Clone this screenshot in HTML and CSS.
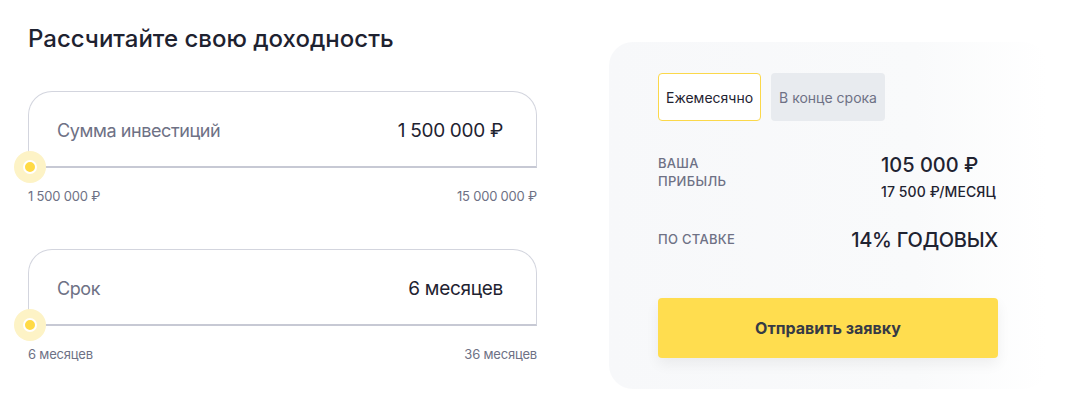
FILE: index.html
```html
<!DOCTYPE html>
<html lang="ru">
<head>
    <meta charset="UTF-8">
    <meta name="viewport" content="width=device-width, initial-scale=1.0">
    <title>Рассчитайте свою доходность</title>
    <link rel="stylesheet" href="styles.css">
</head>
<body>
    <div class="calc">
        <div class="calc-left">
            <h2 class="calc-title">Рассчитайте свою доходность</h2>

            <div class="field">
                <div class="field-box">
                    <span class="field-label">Сумма инвестиций</span>
                    <span class="field-value">1 500 000 ₽</span>
                </div>
                <span class="slider-dot"></span>
                <div class="field-range">
                    <span>1 500 000 ₽</span>
                    <span>15 000 000 ₽</span>
                </div>
            </div>

            <div class="field">
                <div class="field-box">
                    <span class="field-label">Срок</span>
                    <span class="field-value">6 месяцев</span>
                </div>
                <span class="slider-dot"></span>
                <div class="field-range">
                    <span>6 месяцев</span>
                    <span>36 месяцев</span>
                </div>
            </div>
        </div>

        <div class="calc-card">
            <div class="tabs">
                <button class="tab tab-active">Ежемесячно</button>
                <button class="tab">В конце срока</button>
            </div>

            <div class="result-row">
                <div class="result-label">Ваша<br>прибыль</div>
                <div class="result-value">
                    <div class="result-big">105 000 ₽</div>
                    <div class="result-small">17 500 ₽/месяц</div>
                </div>
            </div>

            <div class="result-row result-rate">
                <div class="result-label">По ставке</div>
                <div class="result-big">14% годовых</div>
            </div>

            <button class="submit-btn">Отправить заявку</button>
        </div>
    </div>
</body>
</html>
```

FILE: styles.css
```css
body {
    margin: 0;
    font-family: Inter, "Noto Sans", sans-serif;
    color: #1f2331;
    background-color: #fff;
}
.calc {
    display: flex;
    align-items: flex-start;
    gap: 72px;
    padding: 24px 0 0 28px;
}
.calc-left {
    width: 509px;
}
.calc-title {
    margin: 0 0 37px;
    font-size: 24px;
    line-height: 30px;
    font-weight: 500;
    color: #1e2230;
}
.field {
    position: relative;
    margin-bottom: 45px;
}
.field-box {
    box-sizing: border-box;
    height: 77px;
    display: flex;
    align-items: center;
    justify-content: space-between;
    padding: 3px 33px 0 28px;
    border: 1px solid #d3d5de;
    border-bottom: 2px solid #c7c9d4;
    border-radius: 24px 24px 0 0;
}
.field-label {
    font-size: 18px;
    letter-spacing: -0.4px;
    color: #6e7185;
}
.field-value {
    font-size: 19px;
    letter-spacing: -0.3px;
    color: #1f2331;
}
.slider-dot {
    position: absolute;
    left: -14px;
    top: 60px;
    width: 32px;
    height: 32px;
    border-radius: 50%;
    background-color: #fdf3c6;
}
.slider-dot::after {
    content: "";
    position: absolute;
    left: 9px;
    top: 9px;
    width: 10px;
    height: 10px;
    border: 2px solid #fff;
    border-radius: 50%;
    background-color: #ffda45;
}
.field-range {
    display: flex;
    justify-content: space-between;
    margin-top: 20px;
    font-size: 13px;
    line-height: 16px;
    color: #6e7185;
    letter-spacing: -0.2px;
}
.calc-card {
    box-sizing: border-box;
    width: 438px;
    margin-top: 18px;
    padding: 31px 49px 31px 49px;
    border-radius: 24px;
    background: linear-gradient(90deg, #f7f8fa 0%, #f9fafb 70%, #ffffff 100%);
}
.tabs {
    display: flex;
    gap: 10px;
}
.tab {
    box-sizing: border-box;
    height: 48px;
    padding: 0 7px;
    font-family: inherit;
    font-size: 14px;
    border: 1px solid transparent;
    border-radius: 4px;
    background-color: #e8ebef;
    color: #6e7185;
}
.tab-active {
    background-color: #fff;
    border-color: #fbd84a;
    color: #1f2331;
}
.result-row {
    display: flex;
    justify-content: space-between;
    align-items: flex-start;
    margin-top: 33px;
}
.result-label {
    font-size: 13px;
    line-height: 18px;
    font-weight: 500;
    text-transform: uppercase;
    color: #6e7185;
    letter-spacing: 0.3px;
}
.result-value {
    width: 117px;
}
.result-big {
    font-size: 20px;
    line-height: 24px;
    font-weight: 500;
    text-transform: uppercase;
    color: #1f2331;
}
.result-value .result-big {
    margin-top: -1px;
}
.result-small {
    margin-top: 7px;
    font-size: 14px;
    line-height: 16px;
    font-weight: 500;
    letter-spacing: 0.1px;
    text-transform: uppercase;
    white-space: nowrap;
    color: #1f2331;
}
.result-rate {
    margin-top: 30px;
}
.result-rate .result-big {
    margin-top: -2px;
    letter-spacing: -0.3px;
}
.submit-btn {
    display: block;
    width: 100%;
    height: 60px;
    margin-top: 46px;
    font-family: inherit;
    font-size: 16px;
    font-weight: 700;
    color: #363a45;
    border: none;
    border-radius: 4px;
    background-color: #ffdd4f;
    box-shadow: 0 6px 14px rgba(0,0,0,0.06);
    cursor: pointer;
}
```
